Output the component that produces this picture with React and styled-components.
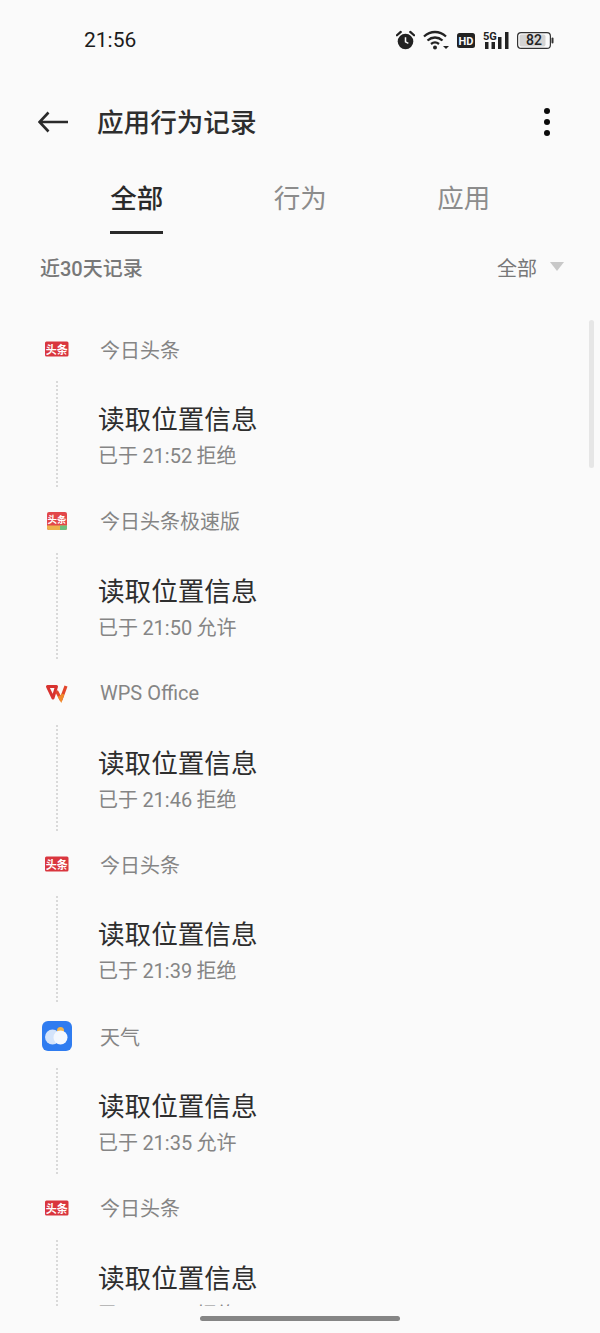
import React from 'react';
import styled, { createGlobalStyle } from 'styled-components';

const GlobalStyle = createGlobalStyle`
  html, body {
    margin: 0;
    padding: 0;
    background: #fafafa;
  }
  body {
    font-family: Roboto, "Noto Sans CJK SC", sans-serif;
  }
`;

const Page = styled.div`
  position: relative;
  width: 600px;
  height: 1333px;
  overflow: hidden;
  background: #fafafa;
`;

const StatusBar = styled.div`
  height: 80px;
  box-sizing: border-box;
  padding: 0 46px 0 84px;
  display: flex;
  align-items: center;
  justify-content: space-between;
`;

const Clock = styled.span`
  font-size: 21px;
  font-weight: 400;
  color: #1c1c1c;
`;

const StatusIcons = styled.div`
  display: flex;
  align-items: center;
  gap: 8px;
`;

const Header = styled.header`
  height: 84px;
  box-sizing: border-box;
  padding: 0 48px 0 38px;
  display: flex;
  align-items: center;
`;

const BackButton = styled.button`
  width: 59px;
  padding: 0;
  border: 0;
  background: none;
  display: flex;
  align-items: center;
`;

const Title = styled.h1`
  flex: 1;
  margin: 0 0 4px;
  font-size: 26.6px;
  font-weight: 500;
  color: #2e2e2e;
`;

const MoreButton = styled.button`
  width: 10px;
  padding: 0;
  border: 0;
  background: none;
  display: flex;
  flex-direction: column;
  align-items: center;
  gap: 5px;
`;

const Dot = styled.i`
  width: 6px;
  height: 6px;
  border-radius: 50%;
  background: #0a0a0a;
`;

const Tabs = styled.nav`
  height: 70px;
  box-sizing: border-box;
  padding: 0 55px;
  display: grid;
  grid-template-columns: repeat(3, 163.5px);
`;

const Tab = styled.div`
  justify-self: center;
  height: 70px;
  box-sizing: border-box;
  padding-top: 15px;
  font-size: 26.5px;
  line-height: 40px;
  font-weight: ${(p) => (p.$active ? 500 : 400)};
  color: ${(p) => (p.$active ? '#2a2a2a' : '#8c8c8c')};
  border-bottom: 3px solid ${(p) => (p.$active ? '#2a2a2a' : 'transparent')};
`;

const FilterRow = styled.div`
  height: 68px;
  box-sizing: border-box;
  padding: 0 36px 2px 40px;
  display: flex;
  align-items: center;
  justify-content: space-between;
  font-size: 20px;
  color: #787878;
`;

const RangeLabel = styled.span`
  font-weight: 500;
`;

const FilterPicker = styled.span`
  display: flex;
  align-items: center;
  gap: 13px;
`;

const Caret = styled.i`
  width: 0;
  height: 0;
  margin-top: -2px;
  border-left: 7px solid transparent;
  border-right: 7px solid transparent;
  border-top: 9px solid #c8c8c8;
`;

const List = styled.div`
  height: 1004px;
  overflow: hidden;
`;

const Item = styled.article`
  height: 171.75px;
  box-sizing: border-box;
  padding: 31px 0 0 41px;
`;

const AppRow = styled.div`
  height: 32px;
  display: flex;
  align-items: center;
  gap: 28px;
`;

const AppIcon = styled.svg`
  width: 31px;
  height: 32px;
  flex: none;
`;

const AppName = styled.span`
  font-size: 20px;
  color: #858585;
`;

const Record = styled.div`
  margin: 16px 0 0 15px;
  height: 106px;
  box-sizing: border-box;
  border-left: 2px dotted #d9d9d9;
  padding: 19px 0 0 40px;
`;

const Action = styled.div`
  font-size: 26.6px;
  line-height: 40px;
  color: #2e2e2e;
`;

const Outcome = styled.div`
  margin-top: 2px;
  font-size: 20px;
  line-height: 28px;
  word-spacing: -0.6px;
  color: #858585;
`;

const Scrollbar = styled.div`
  position: absolute;
  top: 320px;
  right: 6px;
  width: 5px;
  height: 148px;
  border-radius: 3px;
  background: #e6e6e6;
`;

const HomeBar = styled.div`
  position: absolute;
  left: 200px;
  bottom: 12px;
  width: 200px;
  height: 5px;
  border-radius: 3px;
  background: #858585;
`;

const Alarm = () => (
  <svg width="19" height="20" viewBox="0 0 20 21">
    <circle cx="10" cy="12" r="8.200" fill="#222" />
    <path d="M10 7.500V12.500L13 14" fill="none" stroke="#fafafa" strokeWidth="1.600" />
    <path d="M1 5.500 5 2M19 5.500 15 2" stroke="#222" strokeWidth="2.400" strokeLinecap="round" />
  </svg>
);

const Wifi = () => (
  <svg width="26" height="20" viewBox="0 0 26 20">
    <path d="M1 6.500C7.500 .5 16.500 .5 23 6.500M4.500 10.500C9 6.500 15 6.500 19.500 10.500M8 14C10.500 12 13.500 12 16 14" fill="none" stroke="#222" strokeWidth="2.300" />
    <circle cx="12" cy="17.500" r="2" fill="#222" />
    <path d="M20 16h6l-3 3z" fill="#222" />
  </svg>
);

const Hd = () => (
  <svg width="18" height="15" viewBox="0 0 18 15">
    <rect width="18" height="15" rx="2.500" fill="#222" />
    <text x="9" y="11.500" textAnchor="middle" fontFamily="Roboto" fontWeight="700" fontSize="11" fill="#fafafa">HD</text>
  </svg>
);

const Signal = () => (
  <svg width="26" height="19" viewBox="0 0 26 19">
    <text x="0" y="9" fontFamily="Roboto" fontWeight="700" fontSize="11" fill="#222">5G</text>
    <path d="M2 11h3.500v7H2zM8.500 11H12v7H8.500zM15 6h3.500v12H15zM22 1h3.500v17H22z" fill="#222" />
  </svg>
);

const Battery = () => (
  <svg width="37" height="17" viewBox="0 0 37 17">
    <rect x=".6" y=".6" width="32.800" height="15.800" rx="3.500" fill="none" stroke="#333" strokeWidth="1.200" />
    <rect x="2.500" y="2.500" width="26" height="12" rx="2" fill="#d4d4d4" />
    <rect x="34.500" y="5.500" width="2" height="6" rx="1" fill="#333" />
    <text x="17" y="13.400" textAnchor="middle" fontFamily="Roboto" fontWeight="500" fontSize="14" fill="#222">82</text>
  </svg>
);

const BackArrow = () => (
  <svg width="30" height="22" viewBox="0 0 30 22">
    <path d="M10.500 1.500 1.500 11l9 9.500M1.500 11H30" fill="none" stroke="#2a2a2a" strokeWidth="2.600" />
  </svg>
);

// launcher icons for the apps in the log
const ToutiaoIcon = () => (
  <AppIcon viewBox="0 0 31 32">
    <rect x="4" y="8.500" width="23.500" height="15" rx="1.500" fill="#d9363e" />
    <text x="15.800" y="20.500" textAnchor="middle" fontFamily="'Noto Sans CJK SC'" fontWeight="700" fontSize="11" fill="#fff">头条</text>
  </AppIcon>
);

const LiteIcon = () => (
  <AppIcon viewBox="0 0 31 32">
    <rect x="6" y="7" width="20" height="18" rx="2" fill="#e2474a" />
    <path d="M6 20.500h20V23a2 2 0 0 1-2 2H8a2 2 0 0 1-2-2z" fill="#eeb04c" />
    <path d="M19 20.500h7V23a2 2 0 0 1-2 2h-5z" fill="#6cbf7e" />
    <text x="16" y="17.800" textAnchor="middle" fontFamily="'Noto Sans CJK SC'" fontWeight="700" fontSize="9.500" fill="#fff">头条</text>
  </AppIcon>
);

const WpsIcon = () => (
  <AppIcon viewBox="0 0 31 32">
    <path d="M6.500 9.500H15.500L12 21Z" fill="none" stroke="#d8322f" strokeWidth="3" strokeLinejoin="round" />
    <path d="M25 9 20 22.500 15.500 14" fill="none" stroke="#e2452b" strokeWidth="3.200" strokeLinejoin="round" />
    <path d="M18 19 20 22.500 22 17" fill="none" stroke="#f08a2c" strokeWidth="3" />
  </AppIcon>
);

const WeatherIcon = () => (
  <AppIcon viewBox="0 0 31 32">
    <rect x="1" y="1" width="30" height="30" rx="6" fill="#2f7cf0" />
    <circle cx="19.500" cy="10.500" r="3.500" fill="#f3b54d" />
    <circle cx="11.500" cy="17" r="7.500" fill="#d4e4fb" />
    <circle cx="19.500" cy="17.500" r="7" fill="#f4f8fe" />
  </AppIcon>
);

const records = [
  { app: '今日头条', icon: ToutiaoIcon, time: '21:52', result: '拒绝' },
  { app: '今日头条极速版', icon: LiteIcon, time: '21:50', result: '允许' },
  { app: 'WPS Office', icon: WpsIcon, time: '21:46', result: '拒绝' },
  { app: '今日头条', icon: ToutiaoIcon, time: '21:39', result: '拒绝' },
  { app: '天气', icon: WeatherIcon, time: '21:35', result: '允许' },
  { app: '今日头条', icon: ToutiaoIcon, time: '21:30', result: '拒绝' },
];

export default function App() {
  return (
    <Page>
      <GlobalStyle />
      <StatusBar>
        <Clock>21:56</Clock>
        <StatusIcons>
          <Alarm />
          <Wifi />
          <Hd />
          <Signal />
          <Battery />
        </StatusIcons>
      </StatusBar>
      <Header>
        <BackButton><BackArrow /></BackButton>
        <Title>应用行为记录</Title>
        <MoreButton><Dot /><Dot /><Dot /></MoreButton>
      </Header>
      <Tabs>
        <Tab $active>全部</Tab>
        <Tab>行为</Tab>
        <Tab>应用</Tab>
      </Tabs>
      <FilterRow>
        <RangeLabel>近30天记录</RangeLabel>
        <FilterPicker>全部<Caret /></FilterPicker>
      </FilterRow>
      <List>
        {records.map(({ app, icon: Icon, time, result }, i) => (
          <Item key={i}>
            <AppRow>
              <Icon />
              <AppName>{app}</AppName>
            </AppRow>
            <Record>
              <Action>读取位置信息</Action>
              <Outcome>已于 {time} {result}</Outcome>
            </Record>
          </Item>
        ))}
      </List>
      <Scrollbar />
      <HomeBar />
    </Page>
  );
}
